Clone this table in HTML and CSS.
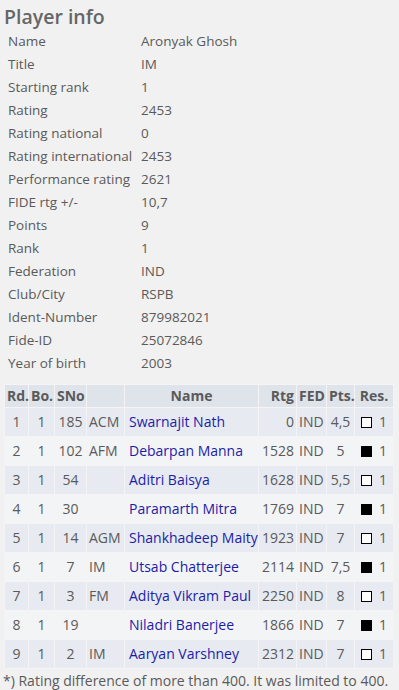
FILE: index.html
```html
<!DOCTYPE html>
<html>
<head>
<meta charset="utf-8">
<link rel="stylesheet" href="styles.css">
</head>
<body>
<h2 class="title">Player info</h2>
<table class="info">
<tr><td class="k">Name</td><td>Aronyak Ghosh</td></tr>
<tr><td class="k">Title</td><td>IM</td></tr>
<tr><td class="k">Starting rank</td><td>1</td></tr>
<tr><td class="k">Rating</td><td>2453</td></tr>
<tr><td class="k">Rating national</td><td>0</td></tr>
<tr><td class="k">Rating international</td><td>2453</td></tr>
<tr><td class="k">Performance rating</td><td>2621</td></tr>
<tr><td class="k">FIDE rtg +/-</td><td>10,7</td></tr>
<tr><td class="k">Points</td><td>9</td></tr>
<tr><td class="k">Rank</td><td>1</td></tr>
<tr><td class="k">Federation</td><td>IND</td></tr>
<tr><td class="k">Club/City</td><td>RSPB</td></tr>
<tr><td class="k">Ident-Number</td><td>879982021</td></tr>
<tr><td class="k">Fide-ID</td><td>25072846</td></tr>
<tr><td class="k">Year of birth</td><td>2003</td></tr>
</table>
<table class="games">
<colgroup>
<col class="w-rd"><col class="w-bo"><col class="w-sno"><col class="w-t"><col class="w-name"><col class="w-rtg"><col class="w-fed"><col class="w-pts"><col class="w-res">
</colgroup>
<thead>
<tr><th class="c-rd">Rd.</th><th class="c-bo">Bo.</th><th class="c-sno">SNo</th><th class="c-t"></th><th class="c-name">Name</th><th class="c-rtg">Rtg</th><th class="c-fed">FED</th><th class="c-pts">Pts.</th><th class="c-res">Res.</th></tr>
</thead>
<tbody>
<tr><td class="c-rd">1</td><td class="c-bo">1</td><td class="c-sno">185</td><td class="c-t">ACM</td><td class="c-name"><a>Swarnajit Nath</a></td><td class="c-rtg">0</td><td class="c-fed">IND</td><td class="c-pts">4,5</td><td class="c-res"><span class="sq w"></span>1</td></tr>
<tr><td class="c-rd">2</td><td class="c-bo">1</td><td class="c-sno">102</td><td class="c-t">AFM</td><td class="c-name"><a>Debarpan Manna</a></td><td class="c-rtg">1528</td><td class="c-fed">IND</td><td class="c-pts">5</td><td class="c-res"><span class="sq b"></span>1</td></tr>
<tr><td class="c-rd">3</td><td class="c-bo">1</td><td class="c-sno">54</td><td class="c-t"></td><td class="c-name"><a>Aditri Baisya</a></td><td class="c-rtg">1628</td><td class="c-fed">IND</td><td class="c-pts">5,5</td><td class="c-res"><span class="sq w"></span>1</td></tr>
<tr><td class="c-rd">4</td><td class="c-bo">1</td><td class="c-sno">30</td><td class="c-t"></td><td class="c-name"><a>Paramarth Mitra</a></td><td class="c-rtg">1769</td><td class="c-fed">IND</td><td class="c-pts">7</td><td class="c-res"><span class="sq b"></span>1</td></tr>
<tr><td class="c-rd">5</td><td class="c-bo">1</td><td class="c-sno">14</td><td class="c-t">AGM</td><td class="c-name"><a>Shankhadeep Maity</a></td><td class="c-rtg">1923</td><td class="c-fed">IND</td><td class="c-pts">7</td><td class="c-res"><span class="sq w"></span>1</td></tr>
<tr><td class="c-rd">6</td><td class="c-bo">1</td><td class="c-sno">7</td><td class="c-t">IM</td><td class="c-name"><a>Utsab Chatterjee</a></td><td class="c-rtg">2114</td><td class="c-fed">IND</td><td class="c-pts">7,5</td><td class="c-res"><span class="sq b"></span>1</td></tr>
<tr><td class="c-rd">7</td><td class="c-bo">1</td><td class="c-sno">3</td><td class="c-t">FM</td><td class="c-name"><a>Aditya Vikram Paul</a></td><td class="c-rtg">2250</td><td class="c-fed">IND</td><td class="c-pts">8</td><td class="c-res"><span class="sq w"></span>1</td></tr>
<tr><td class="c-rd">8</td><td class="c-bo">1</td><td class="c-sno">19</td><td class="c-t"></td><td class="c-name"><a>Niladri Banerjee</a></td><td class="c-rtg">1866</td><td class="c-fed">IND</td><td class="c-pts">7</td><td class="c-res"><span class="sq b"></span>1</td></tr>
<tr><td class="c-rd">9</td><td class="c-bo">1</td><td class="c-sno">2</td><td class="c-t">IM</td><td class="c-name"><a>Aaryan Varshney</a></td><td class="c-rtg">2312</td><td class="c-fed">IND</td><td class="c-pts">7</td><td class="c-res"><span class="sq w"></span>1</td></tr>
</tbody>
</table>
<p class="note">*) Rating difference of more than 400. It was limited to 400.</p>
</body>
</html>
```
FILE: styles.css
```css
html, body {
  margin: 0;
  padding: 0;
  background: #f1f1f1;
}
body {
  font-family: "Open Sans", "Noto Sans", sans-serif;
  font-size: 13.5px;
  color: #5a5a5a;
  padding: 0 4px;
}
.title {
  margin: 0;
  padding: 3px 0 0 0;
  font-size: 19.5px;
  font-weight: 600;
  color: #666;
  line-height: 27px;
}
.info {
  border-collapse: collapse;
  margin: 0 0 9px 0;
}
.info td {
  padding: 0 0 0 4px;
  height: 23px;
  line-height: 23px;
  white-space: nowrap;
}
.info td.k {
  width: 129px;
  padding-right: 0;
}
.games {
  border-collapse: collapse;
  table-layout: fixed;
  width: 389px;
  font-size: 14px;
}
.w-rd { width: 24px; }
.w-bo { width: 26px; }
.w-sno { width: 32px; }
.w-t { width: 38px; }
.w-name { width: 134px; }
.w-rtg { width: 38px; }
.w-fed { width: 30px; }
.w-pts { width: 28px; }
.w-res { width: 39px; }
.games th, .games td {
  border: 1px solid #f4f4f6;
  padding: 0 2px;
  white-space: nowrap;
  overflow: visible;
}
.games th {
  background: #dfe3ea;
  font-weight: 700;
  height: 22px;
  line-height: 20px;
  color: #5a5a5a;
}
.games td {
  height: 28px;
  line-height: 26px;
}
.games tbody tr:nth-child(odd) td { background: #e7eaf0; }
.games tbody tr:nth-child(even) td { background: #f3f4f6; }
.c-rd { text-align: center; }
.c-bo { text-align: center; }
.c-sno { text-align: center; }
.c-t { text-align: left; }
th.c-name { text-align: center; }
td.c-name { text-align: left; padding-left: 4px; }
.c-name a { color: #1c1ca8; }
.c-rtg { text-align: right; }
.c-fed { text-align: left; }
.c-pts { text-align: center; }
.c-res { text-align: center; }
.sq {
  display: inline-block;
  width: 11px;
  height: 11px;
  margin-right: 7px;
  vertical-align: -1px;
  box-sizing: border-box;
}
.sq.w { background: #fff; border: 1px solid #000; }
.sq.b { background: #000; }
.note {
  margin: 0;
  font-size: 14px;
  line-height: 24px;
  margin-left: -1px;
  white-space: nowrap;
}
```
